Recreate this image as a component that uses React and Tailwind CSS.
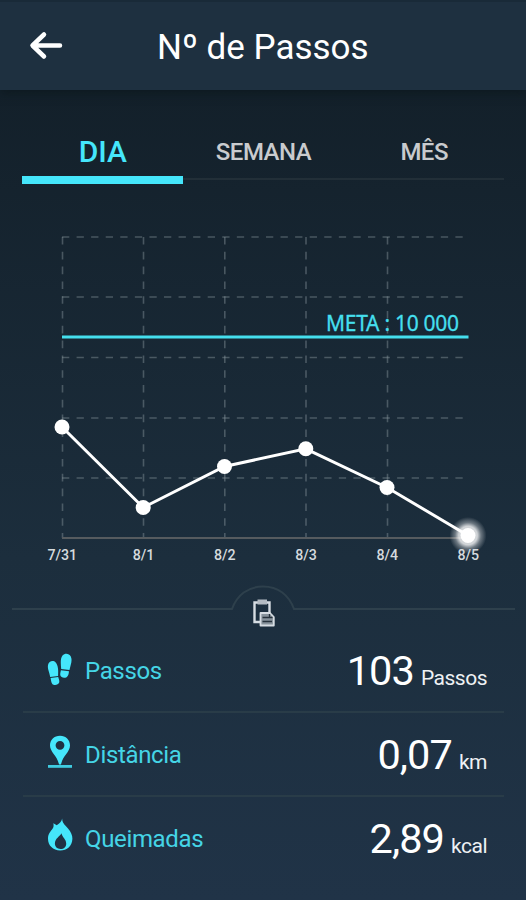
const tabs = [
  { label: 'DIA', active: true },
  { label: 'SEMANA' },
  { label: 'MÊS' },
];

const points = [
  { label: '7/31', x: 62, y: 427 },
  { label: '8/1', x: 143.2, y: 507.5 },
  { label: '8/2', x: 224.5, y: 466.5 },
  { label: '8/3', x: 305.8, y: 448.8 },
  { label: '8/4', x: 387, y: 487.5 },
  { label: '8/5', x: 468, y: 535.5 },
];

const rows = [237, 297, 357.5, 418, 478];
const cols = [62.5, 143.5, 224.8, 306, 387.5];

function StepsIcon() {
  return (
    <svg className="w-[28px] h-[34px]" viewBox="0 0 28 34" fill="#45e6fb">
      <path d="M4.200 23.900C3.400 19 1.300 16 2 12C2.800 8.200 7.200 6.800 9.700 9.600C12.400 12.800 12.400 18 12.100 22.900Z" />
      <path d="M4.600 25.100L12.200 24.100C12.800 26 13.700 27.800 13.200 29.600C12.400 32.200 8 33 6.300 31C5 29.300 5 27.200 4.600 25.100Z" />
      <path d="M15.200 16.100C14.700 10.500 14.200 5.400 16.500 2.500C18.900 -.2 23 .2 24.800 3.400C26.700 7.600 24.500 12 23.500 17.100Z" />
      <path d="M14.900 17.300L23 18.300C22.600 21 22.500 23 20.600 24.200C18.200 25.300 14.800 24.700 14.300 22.300C14 20.600 14.600 19 14.900 17.300Z" />
    </svg>
  );
}

function PinIcon() {
  return (
    <svg className="w-[28px] h-[34px] -mt-[5px]" viewBox="0 0 28 34" fill="#45e6fb">
      <path fillRule="evenodd" d="M14 .8C8.200 .8 4 5 4 10.500C4 17 11.200 20.500 13 29.500H15C16.800 20.500 24 17 24 10.500C24 5 19.800 .8 14 .8ZM14 5.900A4.400 4.400 0 1 1 14 14.700A4.400 4.400 0 1 1 14 5.900Z" />
      <rect x="2" y="30" width="24" height="2.800" opacity=".85" />
    </svg>
  );
}

function FlameIcon() {
  return (
    <svg className="w-[28px] h-[34px] -mt-[7px]" viewBox="0 0 28 34" fill="#45e6fb">
      <path fillRule="evenodd" d="M16.200 .6C16.100 5 18.500 6.500 22 10.500C25 14 26.500 17.500 26.400 20.800C26.100 28.200 21 32.500 14.200 32.500C7 32.500 2 27.500 2 20.800C2 16 4.300 13.700 6.700 10.500C7.900 8.800 7.700 7 7.300 5.200C8.600 5.800 9.700 6.400 10.700 7.300C13.800 5.500 15.600 3.300 16.200 .6ZM15.500 15.200C13.800 18.300 9 20.500 8.900 25.300C8.800 28.700 11.200 31 14.500 31C18 31 20.300 28.700 20.200 25.400C20.100 21 16.300 19.500 15.500 15.200Z" />
    </svg>
  );
}

const stats = [
  { label: 'Passos', value: '103', unit: 'Passos', Icon: StepsIcon },
  { label: 'Distância', value: '0,07', unit: 'km', Icon: PinIcon },
  { label: 'Queimadas', value: '2,89', unit: 'kcal', Icon: FlameIcon },
];

function Chart() {
  return (
    <svg className="block w-full h-[385px]" viewBox="0 184 526 385">
      <defs>
        <radialGradient id="glow">
          <stop offset="0.5" stopColor="#fff" stopOpacity="0.8" />
          <stop offset="0.7" stopColor="#fff" stopOpacity="0.35" />
          <stop offset="1" stopColor="#fff" stopOpacity="0" />
        </radialGradient>
      </defs>
      <g stroke="#88949b" strokeOpacity="0.45" strokeWidth="1.6">
        {rows.map((y) => (
          <line key={y} x1="62" x2="465" y1={y} y2={y} strokeDasharray="7.300 7.270" />
        ))}
        {cols.map((x) => (
          <line key={x} x1={x} x2={x} y1="237" y2="538" strokeDasharray="7.600 7.200" />
        ))}
      </g>
      <line x1="62" x2="468" y1="538" y2="538" stroke="#565b5f" strokeWidth="2" />
      <line x1="62" x2="468.500" y1="337" y2="337" stroke="#45dfee" strokeWidth="3" />
      <text x="326" y="330.500" fill="#45dfee" stroke="#45dfee" strokeWidth="0.3" fontSize="21" className="font-['Noto_Sans',sans-serif]" textLength="133">META : 10 000</text>
      <polyline points={points.map((p) => `${p.x},${p.y}`).join(' ')} fill="none" stroke="#fff" strokeWidth="3" />
      <circle cx="468" cy="535.500" r="18.500" fill="url(#glow)" />
      {points.map((p) => (
        <circle key={p.label} cx={p.x} cy={p.y} r="7.500" fill="#fff" />
      ))}
      {points.map((p) => (
        <text key={p.label} x={p.x + 0.3} y="559.500" fill="#d5dade" fontSize="14.200" fontWeight="500" textAnchor="middle">{p.label}</text>
      ))}
    </svg>
  );
}

export default function App() {
  return (
    <div className="w-[526px] h-[900px] overflow-hidden flex flex-col bg-linear-to-b from-[#13202a] from-10% via-[#1c2e3d] via-62% to-[#203347] font-[Roboto,sans-serif]">
      <header className="h-[90px] shrink-0 bg-[#1e3040] border-t-2 border-[#192a38] flex items-center shadow-[0_3px_9px_rgba(10,20,24,0.55)]">
        <svg className="ml-[29px] -mt-[3px] w-[34px] h-[30px]" viewBox="0 0 34 30" fill="none" stroke="#fff" strokeWidth="4.500" strokeLinecap="round" strokeLinejoin="round">
          <path d="M31 15.500H4M15 4.500L3.500 15.500L15 26.500" />
        </svg>
        <h1 className="ml-[94px] mt-[2px] text-[35px] leading-none text-white whitespace-nowrap">Nº de Passos</h1>
      </header>

      <nav className="mx-[22px] mt-[33px] h-[61px] shrink-0 grid grid-cols-3 text-center font-medium">
        {tabs.map((tab) => (
          <div key={tab.label} className="flex flex-col">
            <span className={tab.active ? 'h-[53px] pl-px leading-[58px] text-[30px] text-[#45e6fb]' : 'h-[56px] pl-px leading-[58px] text-[24px] tracking-[-0.5px] text-[#c9cbce]'}>
              {tab.label}
            </span>
            <div className={tab.active ? 'h-2 bg-[#45e6fb]' : 'h-0.5 -mt-px bg-[#222f38]'} />
          </div>
        ))}
      </nav>

      <Chart />

      <svg className="block w-full h-[60px] shrink-0" viewBox="0 569 526 60" fill="none">
        <path d="M12 609H232C237 595 248 586.500 263 586.500C278 586.500 289 595 294 609H515" stroke="#2e404c" strokeWidth="2" />
        <path d="M254.500 602.500H269.500V622H254.500Z" stroke="#d6dce2" strokeWidth="2.400" />
        <rect x="257.500" y="599.500" width="9.500" height="5" fill="#b4bbc3" />
        <path d="M260.500 613H270L273.800 617V625.500H260.500Z" fill="#87929b" stroke="#d6dce2" strokeWidth="1.800" strokeLinejoin="round" />
        <path d="M262.500 617.500H269M262.500 621.500H272M269.500 614V617.500H272.500" stroke="#27323c" strokeWidth="1.300" />
      </svg>

      <section className="ml-[23px] mr-[22px]">
        {stats.map(({ label, value, unit, Icon }) => (
          <div key={label} className="h-[84px] border-b-2 border-[#293c48] last:border-transparent flex items-center pl-[23px] pr-[17px]">
            <Icon />
            <span className="ml-[11px] mt-px text-[24px] tracking-[-0.35px] text-[#45d5e6]">{label}</span>
            <div className="ml-auto mt-[4px] flex items-baseline gap-[7px] text-white">
              <span className="text-[41.500px] leading-none tracking-[-0.9px]">{value}</span>
              <span className="text-[21px] tracking-[-0.5px] text-[#eef1f4]">{unit}</span>
            </div>
          </div>
        ))}
      </section>
    </div>
  );
}
